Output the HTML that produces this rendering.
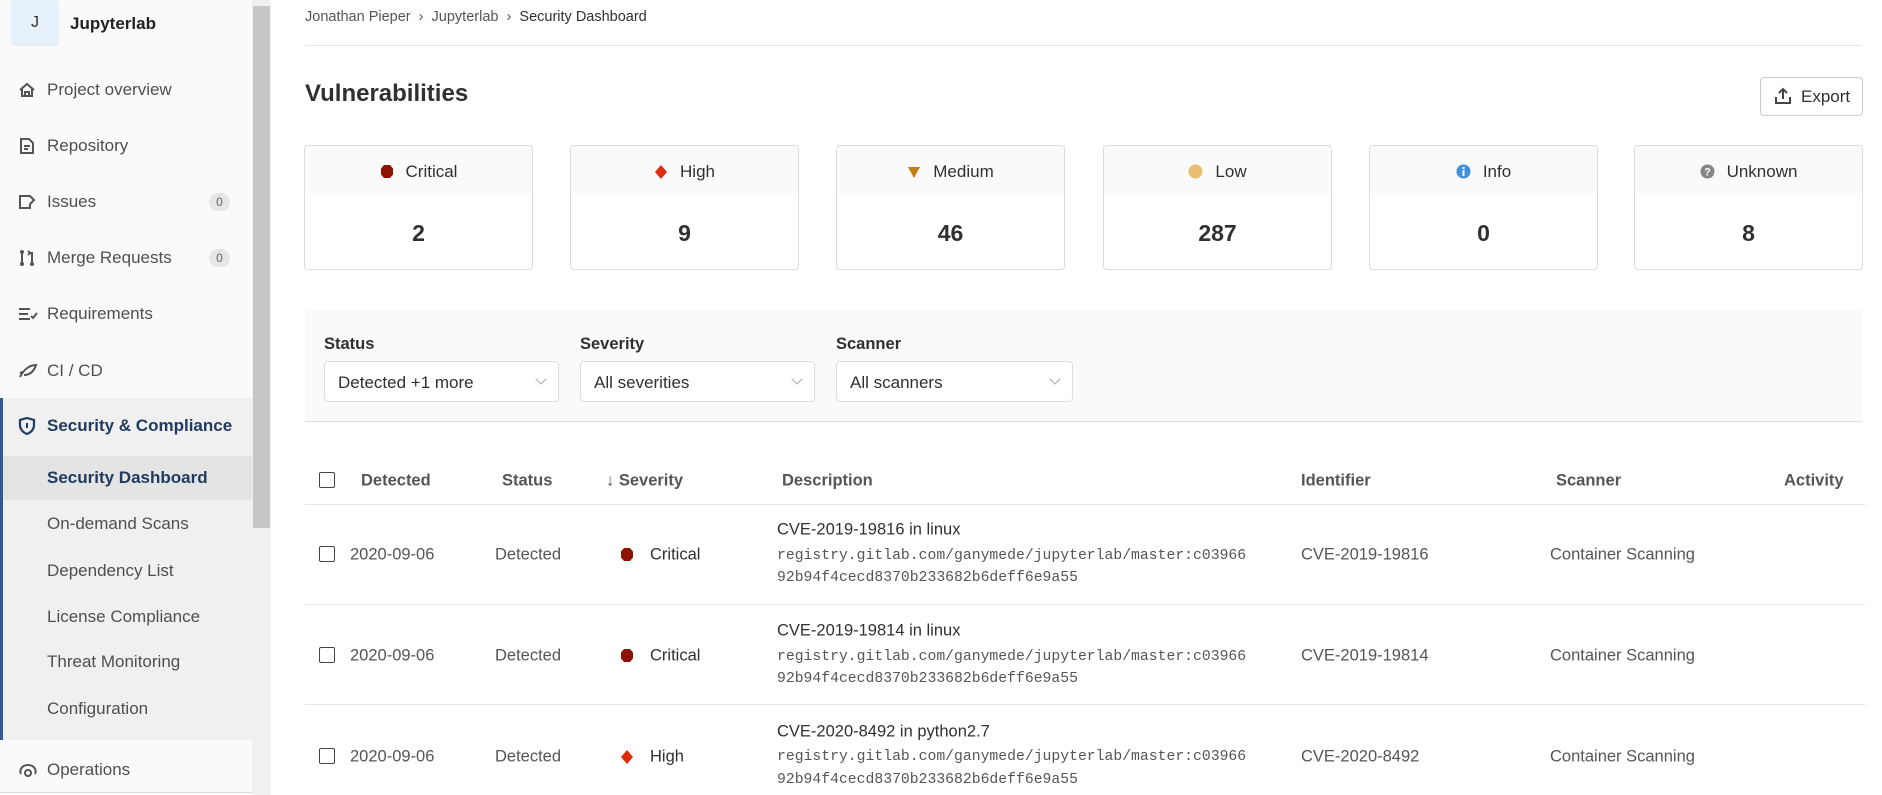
<!DOCTYPE html>
<html><head><meta charset="utf-8"><style>
*{box-sizing:border-box;margin:0;padding:0}
body{width:1882px;height:795px;overflow:hidden;background:#fff;font-family:"Liberation Sans",sans-serif;color:#303030;position:relative}
.a{position:absolute;white-space:nowrap}
.side{position:absolute;left:0;top:0;width:252px;height:795px;background:#fafafa}
.nav{position:absolute;left:47px;font-size:17px;color:#4f4f4f;transform:translateY(-50%)}
.ico{position:absolute;left:18px;transform:translateY(-50%)}
.badge{position:absolute;left:209px;width:21px;height:18px;border-radius:9px;background:#e6e6e6;color:#666;font-size:12px;text-align:center;line-height:18px;transform:translateY(-50%)}
.card{position:absolute;top:145px;width:229px;height:125px;border:1px solid #dcdcdc;border-radius:4px;overflow:hidden}
.card .h{height:47px;background:#fafafa;display:flex;align-items:center;justify-content:center;gap:12px;font-size:17px;padding-top:4px}
.card .n{text-align:center;font-size:23px;font-weight:bold;margin-top:27px}
.sel{position:absolute;top:361px;height:41px;border:1px solid #ddd;border-radius:4px;background:#fff;font-size:17px;padding:11px 13px;color:#303030}
.sel:after{content:"";position:absolute;right:13px;top:13px;width:7px;height:7px;border-right:1.5px solid #aaa;border-bottom:1.5px solid #aaa;transform:rotate(45deg)}
.lab{position:absolute;top:335px;font-size:16.5px;font-weight:bold}
.th{position:absolute;top:481px;font-size:16.5px;font-weight:bold;color:#555;transform:translateY(-50%)}
.cb{position:absolute;left:319px;width:16px;height:16px;border:1.5px solid #444;border-radius:2px;background:#fff}
.td{position:absolute;font-size:16.5px;color:#555;transform:translateY(-50%)}
.mono{position:absolute;left:777px;font-family:"Liberation Mono",monospace;font-size:14.75px;color:#555;transform:translateY(-50%)}
.hl{position:absolute;left:305px;width:1560px;height:1px;background:#e5e5e5}
</style></head><body>
<div class="side">
  <div class="a" style="left:11px;top:0;width:48px;height:46px;background:#e6f0fb;border-radius:4px;text-align:center;line-height:46px;font-size:16px;color:#333">J</div>
  <div class="a" style="left:70px;top:14px;font-size:17px;font-weight:bold;color:#222">Jupyterlab</div>

  <svg class="ico" style="top:90px" width="18" height="16" viewBox="0 0 18 16"><path d="M2 8 L9 2 L16 8 M4 7 V14 H14 V7 M7 14 V10 H11 V14" fill="none" stroke="#555" stroke-width="2"/></svg>
  <div class="nav" style="top:90px">Project overview</div>
  <svg class="ico" style="top:146px;left:19px" width="16" height="18" viewBox="0 0 16 18"><path d="M2 2 H10 L14 6 V16 H2 Z M5 9 H11 M5 12 H9" fill="none" stroke="#555" stroke-width="2"/></svg>
  <div class="nav" style="top:146px">Repository</div>
  <svg class="ico" style="top:202px" width="18" height="16" viewBox="0 0 18 16"><path d="M2 2 H12 L16 6 L12 10 V14 H2 Z" fill="none" stroke="#555" stroke-width="2"/></svg>
  <div class="nav" style="top:202px">Issues</div><div class="badge" style="top:202px">0</div>
  <svg class="ico" style="top:258px" width="18" height="18" viewBox="0 0 18 18"><path d="M4 3 V15 M12 4 L10 2 M12 4 L10 6 M12 4 H14 V15" fill="none" stroke="#555" stroke-width="2"/><circle cx="4" cy="3" r="2" fill="#555"/><circle cx="4" cy="15" r="2" fill="#555"/><circle cx="14" cy="15" r="2" fill="#555"/></svg>
  <div class="nav" style="top:258px">Merge Requests</div><div class="badge" style="top:258px">0</div>
  <svg class="ico" style="top:314px" width="20" height="14" viewBox="0 0 20 14"><path d="M1 2 H12 M1 7 H10 M1 12 H12 M13 9 L15 11 L19 6" fill="none" stroke="#555" stroke-width="2"/></svg>
  <div class="nav" style="top:314px">Requirements</div>
  <svg class="ico" style="top:371px" width="20" height="16" viewBox="0 0 20 16"><path d="M2 14 C6 6 12 2 18 2 C16 8 12 12 6 12 M5 9 L2 10" fill="none" stroke="#555" stroke-width="2"/></svg>
  <div class="nav" style="top:371px">CI / CD</div>

  <div class="a" style="left:0;top:398px;width:252px;height:342px;background:#f0f0f0"></div>
  <div class="a" style="left:0;top:398px;width:3px;height:342px;background:#2f5a8d"></div>
  <div class="a" style="left:3px;top:456px;width:249px;height:44px;background:#e4e4e4"></div>
  <svg class="ico" style="top:426px" width="18" height="20" viewBox="0 0 18 20"><path d="M9 2 L16 4 V9 C16 14 12 17 9 18 C6 17 2 14 2 9 V4 Z" fill="none" stroke="#1f3b60" stroke-width="2.2"/><path d="M9 7 V12" stroke="#1f3b60" stroke-width="2"/></svg>
  <div class="nav" style="top:426px;font-weight:bold;color:#1f3b60">Security &amp; Compliance</div>
  <div class="nav" style="top:478px;font-weight:bold;color:#1f3b60">Security Dashboard</div>
  <div class="nav" style="top:524px">On-demand Scans</div>
  <div class="nav" style="top:571px">Dependency List</div>
  <div class="nav" style="top:617px">License Compliance</div>
  <div class="nav" style="top:662px">Threat Monitoring</div>
  <div class="nav" style="top:709px">Configuration</div>
  <svg class="ico" style="top:770px" width="20" height="16" viewBox="0 0 20 16"><path d="M3 12 C1 8 4 3 10 3 C16 3 19 8 17 12" fill="none" stroke="#555" stroke-width="2"/><circle cx="10" cy="11" r="3" fill="none" stroke="#555" stroke-width="2"/></svg>
  <div class="nav" style="top:770px">Operations</div>
  <div class="a" style="left:0;top:792px;width:252px;height:1px;background:#ddd"></div>
</div>
<div class="a" style="left:252px;top:0;width:19px;height:795px;background:#f0f0f0"></div>
<div class="a" style="left:253px;top:6px;width:17px;height:522px;background:#c6c6c6"></div>

<div class="a" style="left:305px;top:9px;font-size:14.5px;color:#555">Jonathan Pieper&nbsp;&nbsp;›&nbsp;&nbsp;Jupyterlab&nbsp;&nbsp;›&nbsp;&nbsp;<span style="color:#303030">Security Dashboard</span></div>
<div class="hl" style="top:45px;width:1557px"></div>
<div class="a" style="left:305px;top:80px;font-size:24px;font-weight:bold;color:#303030">Vulnerabilities</div>
<div class="a" style="left:1760px;top:77px;width:103px;height:39px;border:1px solid #ccc;border-radius:4px;font-size:17px;padding:9px 0 0 40px;color:#303030">Export</div>
<svg class="a" style="left:1774px;top:87px" width="18" height="18" viewBox="0 0 18 18"><path d="M9 12 V2 M5 6 L9 2 L13 6 M2 10 V16 H16 V10" fill="none" stroke="#444" stroke-width="2"/></svg>

<div class="card" style="left:304px"><div class="h"><svg width="14" height="15"><polygon points="4,1 10,1 13,4.5 13,10.5 10,14 4,14 1,10.5 1,4.5" fill="#8d1300"/></svg>Critical</div><div class="n">2</div></div>
<div class="card" style="left:570px"><div class="h"><svg width="14" height="16"><polygon points="7,1 13,8 7,15 1,8" fill="#dd2b0e"/></svg>High</div><div class="n">9</div></div>
<div class="card" style="left:836px"><div class="h"><svg width="14" height="14"><polygon points="1,2 13,2 7,13" fill="#c17d10"/></svg>Medium</div><div class="n">46</div></div>
<div class="card" style="left:1103px"><div class="h"><svg width="15" height="15"><circle cx="7.5" cy="7.5" r="7" fill="#e9be74"/></svg>Low</div><div class="n">287</div></div>
<div class="card" style="left:1369px"><div class="h"><svg width="15" height="15"><circle cx="7.5" cy="7.5" r="7" fill="#428fdc"/><rect x="6.5" y="6" width="2" height="6" fill="#fff"/><rect x="6.5" y="3" width="2" height="2" fill="#fff"/></svg>Info</div><div class="n">0</div></div>
<div class="card" style="left:1634px"><div class="h"><svg width="15" height="15"><circle cx="7.5" cy="7.5" r="7" fill="#868686"/><text x="7.5" y="11.5" font-size="11" font-weight="bold" fill="#fff" text-anchor="middle" font-family="Liberation Sans">?</text></svg>Unknown</div><div class="n">8</div></div>

<div class="a" style="left:305px;top:310px;width:1557px;height:112px;background:#fafafa;border-bottom:1px solid #ddd"></div>
<div class="lab" style="left:324px">Status</div>
<div class="lab" style="left:580px">Severity</div>
<div class="lab" style="left:836px">Scanner</div>
<div class="sel" style="left:324px;width:235px">Detected +1 more</div>
<div class="sel" style="left:580px;width:235px">All severities</div>
<div class="sel" style="left:836px;width:237px">All scanners</div>

<div class="cb" style="top:472px"></div>
<div class="th" style="left:361px">Detected</div>
<div class="th" style="left:502px">Status</div>
<div class="th" style="left:606px">↓ Severity</div>
<div class="th" style="left:782px">Description</div>
<div class="th" style="left:1301px">Identifier</div>
<div class="th" style="left:1556px">Scanner</div>
<div class="th" style="left:1784px">Activity</div>
<div class="hl" style="top:504px"></div>

<!-- row 1 -->
<div class="cb" style="top:546px"></div>
<div class="td" style="left:350px;top:555px">2020-09-06</div>
<div class="td" style="left:495px;top:555px">Detected</div>
<svg class="a" style="left:620px;top:547px" width="14" height="15"><polygon points="4,1 10,1 13,4.5 13,10.5 10,14 4,14 1,10.5 1,4.5" fill="#8d1300"/></svg>
<div class="td" style="left:650px;top:555px;color:#303030">Critical</div>
<div class="td" style="left:777px;top:530px;color:#303030">CVE-2019-19816 in linux</div>
<div class="mono" style="top:556px">registry.gitlab.com/ganymede/jupyterlab/master:c03966</div>
<div class="mono" style="top:578px">92b94f4cecd8370b233682b6deff6e9a55</div>
<div class="td" style="left:1301px;top:555px">CVE-2019-19816</div>
<div class="td" style="left:1550px;top:555px">Container Scanning</div>
<div class="hl" style="top:604px"></div>
<!-- row 2 -->
<div class="cb" style="top:647px"></div>
<div class="td" style="left:350px;top:656px">2020-09-06</div>
<div class="td" style="left:495px;top:656px">Detected</div>
<svg class="a" style="left:620px;top:648px" width="14" height="15"><polygon points="4,1 10,1 13,4.5 13,10.5 10,14 4,14 1,10.5 1,4.5" fill="#8d1300"/></svg>
<div class="td" style="left:650px;top:656px;color:#303030">Critical</div>
<div class="td" style="left:777px;top:631px;color:#303030">CVE-2019-19814 in linux</div>
<div class="mono" style="top:657px">registry.gitlab.com/ganymede/jupyterlab/master:c03966</div>
<div class="mono" style="top:679px">92b94f4cecd8370b233682b6deff6e9a55</div>
<div class="td" style="left:1301px;top:656px">CVE-2019-19814</div>
<div class="td" style="left:1550px;top:656px">Container Scanning</div>
<div class="hl" style="top:704px"></div>
<!-- row 3 -->
<div class="cb" style="top:748px"></div>
<div class="td" style="left:350px;top:757px">2020-09-06</div>
<div class="td" style="left:495px;top:757px">Detected</div>
<svg class="a" style="left:620px;top:749px" width="14" height="16"><polygon points="7,1 13,8 7,15 1,8" fill="#dd2b0e"/></svg>
<div class="td" style="left:650px;top:757px;color:#303030">High</div>
<div class="td" style="left:777px;top:732px;color:#303030">CVE-2020-8492 in python2.7</div>
<div class="mono" style="top:757px">registry.gitlab.com/ganymede/jupyterlab/master:c03966</div>
<div class="mono" style="top:780px">92b94f4cecd8370b233682b6deff6e9a55</div>
<div class="td" style="left:1301px;top:757px">CVE-2020-8492</div>
<div class="td" style="left:1550px;top:757px">Container Scanning</div>
</body></html>
